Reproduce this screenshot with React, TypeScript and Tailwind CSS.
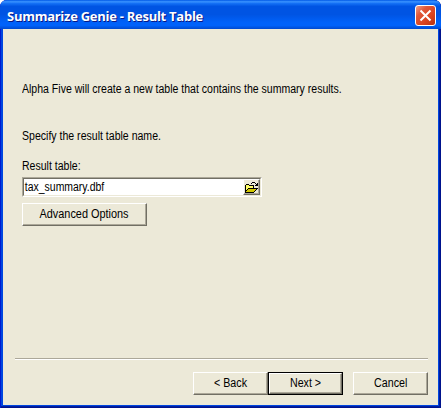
import type { ReactNode } from 'react';

const label = "block w-max whitespace-nowrap font-['Liberation_Sans',Arial,sans-serif] text-[12px] leading-[14px]";

function WizardButton({ children, primary = false }: { children: ReactNode; primary?: boolean }) {
  return (
    <button
      className={`h-[23px] w-[75px] font-['Liberation_Sans',Arial,sans-serif] text-[12px] leading-[14px] ${
        primary ? 'border border-black' : ''
      }`}
    >
      <span className="flex h-full w-full items-center justify-center border border-t-white border-l-white border-r-[#716f64] border-b-[#716f64] pb-px shadow-[inset_-1px_-1px_0_#aca899]">
        <span className="block scale-x-[0.89]">{children}</span>
      </span>
    </button>
  );
}

function FolderIcon() {
  return (
    <svg width="14" height="11" viewBox="0 0 14 11" shapeRendering="crispEdges">
      <path d="M1 2h3v1h5v3h4v1h-1v1h-1v1h-1v1h-1v1H0V3h1z" fill="#000" />
      <path d="M1 3h3v1h4v2H3v1H2v1H1z" fill="#ffff66" />
      <path d="M4 7h7v1h-1v1H9v1H1V9h1V8h1V7z" fill="#d2c800" />
      <path d="M7 0h3v1H7zM6 1h1v1H6zM10 1h1v1h-1zM12 1h1v3h-3V3h1V2h1z" fill="#000" />
    </svg>
  );
}

export default function App() {
  return (
    <div className="flex h-[408px] w-[441px] flex-col overflow-hidden rounded-t-[7px] bg-[#0046e0] text-black shadow-[inset_1px_0_0_#0019cf,inset_-1px_0_0_#00138c,inset_-2px_0_0_#001da0,inset_0_-1px_0_#00138c,inset_0_-2px_0_#001da0]">
      <header className="flex h-[29px] shrink-0 items-center justify-between bg-[linear-gradient(180deg,#0058e6_0%,#3a93ff_6%,#1470f5_12%,#0054e3_22%,#0054e3_50%,#0062fa_78%,#0062fa_88%,#0049cf_100%)] pr-[5px] pl-[7px]">
        <h1 className="mt-[2px] whitespace-nowrap font-['Open_Sans',sans-serif] text-[13px] leading-[18px] font-bold tracking-[-0.27px] text-white [text-shadow:1px_1px_#0a1883]">
          Summarize Genie - Result Table
        </h1>
        <button aria-label="Close" className="mt-[2px] flex h-[21px] w-[21px] items-center justify-center rounded-[3px] border border-white bg-[linear-gradient(135deg,#f0a088_0%,#e0583a_30%,#da4420_65%,#b83210_100%)]">
          <svg width="13" height="13" viewBox="0 0 13 13"><path d="M1.5 1.5l10 10M11.5 1.5l-10 10" stroke="#fff" strokeWidth="2" /></svg>
        </button>
      </header>
      <main className="mx-[3px] mb-[3px] flex flex-1 flex-col bg-[#ece9d8]">
        <div className="flex flex-col pt-[53px] pl-[19px]">
          <p className={`${label} origin-left scale-x-[0.878]`}>Alpha Five will create a new table that contains the summary results.</p>
          <p className={`${label} mt-[33px] origin-left scale-x-[0.879]`}>Specify the result table name.</p>
          <label className={`${label} mt-[16px] origin-left scale-x-[0.878]`}>Result table:</label>
          <div className="mt-[4px] h-[20px] w-[240px] border border-t-[#aca899] border-r-white border-b-white border-l-[#aca899]">
            <div className="flex h-full items-center justify-between border border-t-[#716f64] border-r-[#ece9d8] border-b-[#ece9d8] border-l-[#716f64] bg-white">
              <span className={`${label} origin-left scale-x-[0.87] pb-px pl-[1px]`}>tax_summary.dbf</span>
              <button aria-label="Browse" className="flex h-[16px] w-[17px] items-center justify-center border border-t-white border-r-[#716f64] border-b-[#716f64] border-l-white bg-[#ece9d8] shadow-[inset_-1px_-1px_0_#aca899]"><FolderIcon /></button>
            </div>
          </div>
          <button className="mt-[6px] flex h-[23px] w-[125px] items-center justify-center border border-t-white border-r-[#716f64] border-b-[#716f64] border-l-white shadow-[inset_-1px_-1px_0_#aca899]">
            <span className={`${label} scale-x-[0.908] pb-px`}>Advanced Options</span>
          </button>
        </div>
        <footer className="mt-auto mr-[10px] mb-[10px] ml-[12px]">
          <div className="h-[2px] border-t border-b border-t-[#aca899] border-b-white" />
          <div className="mt-[12px] flex justify-end">
            <WizardButton>&lt; Back</WizardButton>
            <WizardButton primary>Next &gt;</WizardButton>
            <div className="ml-[10px] flex"><WizardButton>Cancel</WizardButton></div>
          </div>
        </footer>
      </main>
    </div>
  );
}
